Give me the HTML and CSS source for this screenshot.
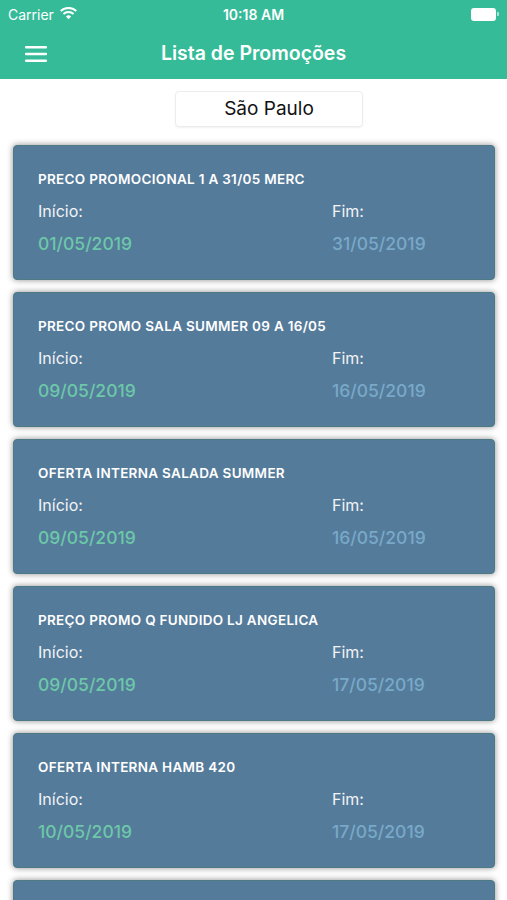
FILE: index.html
```html
<!DOCTYPE html>
<html>
<head>
  <meta charset="UTF-8" />
  <title>Lista de Promoções</title>
  <link rel="stylesheet" href="styles.css">
</head>
<body>

<div class="header">
  <div class="status">
    <span class="carrier">Carrier
      <svg class="wifi" width="17" height="13" viewBox="0 0 16 12"><path d="M8 11.5 5.6 8.9a3.4 3.4 0 0 1 4.8 0Z M3.9 7.1a5.9 5.9 0 0 1 8.2 0l1.3-1.4a7.9 7.9 0 0 0-10.8 0Z M1.3 4.4a9.6 9.6 0 0 1 13.4 0L16 3A11.6 11.6 0 0 0 0 3Z" fill="#fff"/></svg>
    </span>
    <span class="time">10:18 AM</span>
    <span class="battery"><span class="level"></span><span class="tip"></span></span>
  </div>
  <div class="nav">
    <svg class="menu" width="22" height="16" viewBox="0 0 22 16"><rect y="0" width="22" height="2.4" rx="1" fill="#fff"/><rect y="6.8" width="22" height="2.4" rx="1" fill="#fff"/><rect y="13.6" width="22" height="2.4" rx="1" fill="#fff"/></svg>
    <div class="title">Lista de Promoções</div>
  </div>
</div>

<div class="picker">São Paulo</div>

<div class="list">
  <div class="card">
    <div class="name">PRECO PROMOCIONAL 1 A 31/05 MERC</div>
    <div class="dates">
      <div><div class="label">Início:</div><div class="start">01/05/2019</div></div>
      <div><div class="label">Fim:</div><div class="end">31/05/2019</div></div>
    </div>
  </div>
  <div class="card">
    <div class="name">PRECO PROMO SALA SUMMER 09 A 16/05</div>
    <div class="dates">
      <div><div class="label">Início:</div><div class="start">09/05/2019</div></div>
      <div><div class="label">Fim:</div><div class="end">16/05/2019</div></div>
    </div>
  </div>
  <div class="card">
    <div class="name">OFERTA INTERNA SALADA SUMMER</div>
    <div class="dates">
      <div><div class="label">Início:</div><div class="start">09/05/2019</div></div>
      <div><div class="label">Fim:</div><div class="end">16/05/2019</div></div>
    </div>
  </div>
  <div class="card">
    <div class="name">PREÇO PROMO Q FUNDIDO LJ ANGELICA</div>
    <div class="dates">
      <div><div class="label">Início:</div><div class="start">09/05/2019</div></div>
      <div><div class="label">Fim:</div><div class="end">17/05/2019</div></div>
    </div>
  </div>
  <div class="card">
    <div class="name">OFERTA INTERNA HAMB 420</div>
    <div class="dates">
      <div><div class="label">Início:</div><div class="start">10/05/2019</div></div>
      <div><div class="label">Fim:</div><div class="end">17/05/2019</div></div>
    </div>
  </div>
  <!-- next card, only its top edge is on screen -->
  <div class="card"></div>
</div>

</body>
</html>
```

FILE: styles.css
```css
body { margin: 0; font-family: Inter, "Noto Sans", sans-serif; background: #fff; height: 900px; overflow: hidden; }

.header { background: #35bb98; height: 79px; color: #fff; }
.status { height: 28px; display: flex; align-items: center; justify-content: space-between; padding: 0 8px 0 8px; font-size: 14px; }
.carrier { display: flex; align-items: center; gap: 6px; width: 150px; }
.wifi { margin-top: -2px; }
.time { font-weight: 600; }
.battery { width: 150px; display: flex; justify-content: flex-end; align-items: center; }
.battery .level { width: 23px; height: 11px; background: #fff; border-radius: 3px; border: 1px solid rgba(255,255,255,0.6); }
.battery .tip { width: 2px; height: 4px; background: rgba(255,255,255,0.6); border-radius: 0 1px 1px 0; margin-left: 1px; }
.nav { height: 51px; display: flex; align-items: center; }
.menu { margin-left: 25px; }
.nav .title { flex: 1; text-align: center; font-size: 19.5px; font-weight: 600; margin-right: 47px; margin-top: -2px; }

.picker { width: 188px; height: 36px; margin: 12px 0 0 175px; border: 1px solid #ececec; border-radius: 4px; box-sizing: border-box; text-align: center; line-height: 34px; font-size: 19px; color: #111; box-shadow: 0 1px 2px rgba(0,0,0,0.06); }

.list { padding: 18px 12px 0 13px; display: flex; flex-direction: column; gap: 12px; }
.card { background: #557b9b; border: 1px solid #4d7a84; border-radius: 4px; height: 135px; box-sizing: border-box; padding: 25px 24px 0 24px; box-shadow: 0 0 6px rgba(0,0,0,0.45); flex-shrink: 0; }
.name { color: #fff; font-size: 13.5px; font-weight: 600; letter-spacing: 0.3px; }
.dates { display: grid; grid-template-columns: 294px 1fr; margin-top: 14px; }
.label { color: #f2f4f6; font-size: 16px; }
.start { color: #6cc8a8; font-size: 17.5px; font-weight: 500; margin-top: 12px; }
.end { color: #78a9c8; font-size: 17.5px; font-weight: 500; margin-top: 12px; }
```
